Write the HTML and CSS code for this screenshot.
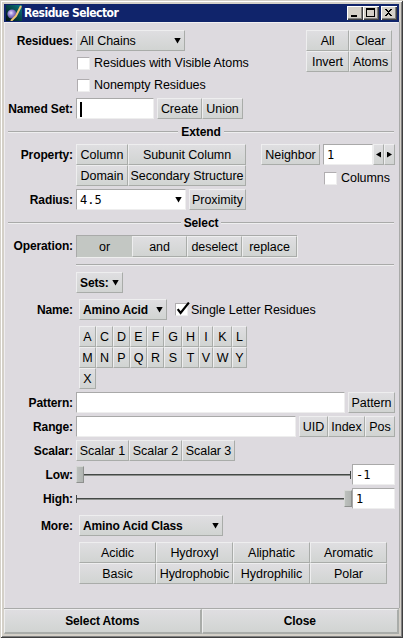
FILE: index.html
```html
<!DOCTYPE html>
<html lang="en">
<head>
<meta charset="utf-8">
<title>Residue Selector</title>
<link rel="stylesheet" href="styles.css">
</head>
<body>
<div class="window">
  <header class="titlebar">
    <svg class="logo" width="16" height="16" viewBox="0 0 16 16">
      <defs>
        <linearGradient id="sky" x1="0" y1="1" x2="1" y2="0"><stop offset="0" stop-color="#001010"/><stop offset=".5" stop-color="#064545"/><stop offset="1" stop-color="#087887"/></linearGradient>
        <radialGradient id="ball" cx=".4" cy=".38" r=".65"><stop offset="0" stop-color="#eee8ff"/><stop offset=".4" stop-color="#a08fda"/><stop offset="1" stop-color="#4d3f93"/></radialGradient>
      </defs>
      <rect width="16" height="16" fill="url(#sky)"/>
      <circle cx="6" cy="9" r="4.6" fill="url(#ball)"/>
      <path d="M15 1L10 11L5 16" fill="none" stroke="#f0c675" stroke-width="2"/>
    </svg>
    <h1 class="title">Residue Selector</h1>
    <span class="winbtn"><svg width="15" height="14"><path d="M4 9h6v2H4z"/></svg></span>
    <span class="winbtn"><svg width="15" height="14"><path fill-rule="evenodd" d="M3 2h9v9H3zM4 4v6h7V4z"/></svg></span>
    <span class="winbtn gap"><svg width="15" height="14"><path d="M4 3h2v1h1v1h1V4h1V3h2v1h-1v1H9v1H8v1h1v1h1v1h1v1H9V9H8V8H7v1H6v1H4V9h1V8h1V7h1V6H6V5H5V4H4z"/></svg></span>
  </header>

  <main class="panel">
    <section class="split first">
      <div>
        <div class="row"><b class="label">Residues:</b><span class="btn menu w109">All Chains<i class="down"></i></span></div>
        <div class="row check-row"><span class="check"></span>Residues with Visible Atoms</div>
        <div class="row check-row"><span class="check"></span>Nonempty Residues</div>
        <div class="row named"><b class="label">Named Set:</b><span class="field w78"><i class="caret"></i></span><span class="btn w45 ml3">Create</span><span class="btn w41">Union</span></div>
      </div>
      <div class="grid actions"><span class="btn">All</span><span class="btn">Clear</span><span class="btn">Invert</span><span class="btn">Atoms</span></div>
    </section>

    <h2 class="divider">Extend</h2>

    <section class="split">
      <div>
        <div class="row top"><b class="label">Property:</b><div class="grid property"><span class="btn">Column</span><span class="btn">Subunit Column</span><span class="btn">Domain</span><span class="btn">Secondary Structure</span></div></div>
        <div class="row mt3"><b class="label">Radius:</b><span class="field combo w110">4.5<i class="down"></i></span><span class="btn w57 ml3">Proximity</span></div>
      </div>
      <div class="neighbor">
        <div class="row"><span class="btn w59">Neighbor</span><span class="field w50 ml3">1</span><span class="btn w11"><i class="side left"></i></span><span class="btn w11"><i class="side right"></i></span></div>
        <div class="row columns"><span class="check"></span>Columns</div>
      </div>
    </section>

    <h2 class="divider">Select</h2>

    <div class="row op"><b class="label">Operation:</b><div class="radio"><span class="btn on w55">or</span><span class="btn w55">and</span><span class="btn w55">deselect</span><span class="btn w55">replace</span></div></div>
    <hr class="rule">
    <div class="row sets"><b class="label"></b><span class="btn menu bold w47">Sets:<i class="down"></i></span></div>
    <div class="row mt6"><b class="label">Name:</b><span class="btn menu bold w88 ml3">Amino Acid<i class="down"></i></span><span class="check single"><svg class="tick" width="15" height="14" viewBox="0 0 15 14"><path d="M1.7 7.2L4.6 11L12.9 0.6" fill="none" stroke="#000" stroke-width="2.2"/></svg></span>Single Letter Residues</div>
    <div class="grid letters"><span class="btn">A</span><span class="btn">C</span><span class="btn">D</span><span class="btn">E</span><span class="btn">F</span><span class="btn">G</span><span class="btn">H</span><span class="btn">I</span><span class="btn">K</span><span class="btn">L</span><span class="btn">M</span><span class="btn">N</span><span class="btn">P</span><span class="btn">Q</span><span class="btn">R</span><span class="btn">S</span><span class="btn">T</span><span class="btn">V</span><span class="btn">W</span><span class="btn">Y</span><span class="btn">X</span></div>
    <div class="row mt3"><b class="label">Pattern:</b><span class="field grow"></span><span class="btn w47 ml3">Pattern</span></div>
    <div class="row mt3"><b class="label">Range:</b><span class="field grow"></span><span class="btn w29 ml3">UID</span><span class="btn w37">Index</span><span class="btn w30">Pos</span></div>
    <div class="row mt3"><b class="label">Scalar:</b><span class="btn w53">Scalar 1</span><span class="btn w53">Scalar 2</span><span class="btn w53">Scalar 3</span></div>
    <div class="row mt3"><b class="label">Low:</b><div class="slider"><i class="thumb"></i><i class="track"></i><i class="end"></i></div><span class="field w43">-1</span></div>
    <div class="row mt3"><b class="label">High:</b><div class="slider high"><i class="end"></i><i class="track"></i><i class="thumb"></i></div><span class="field w43">1</span></div>
    <div class="row mt6"><b class="label">More:</b><span class="btn menu bold w144 ml3">Amino Acid Class<i class="down"></i></span></div>
    <div class="grid classes"><span class="btn">Acidic</span><span class="btn">Hydroxyl</span><span class="btn">Aliphatic</span><span class="btn">Aromatic</span><span class="btn">Basic</span><span class="btn">Hydrophobic</span><span class="btn">Hydrophilic</span><span class="btn">Polar</span></div>
  </main>

  <footer class="footer"><span class="btn bold">Select Atoms</span><span class="btn bold">Close</span></footer>
</div>
</body>
</html>
```

FILE: styles.css
```css
* { box-sizing: border-box; }
body {
  margin: 0;
  width: 403px;
  height: 638px;
  overflow: hidden;
  font: 12.5px/14px "Liberation Sans", Arial, sans-serif;
  letter-spacing: -0.05px;
  color: #000;
}
b, .bold { font-size: 12px; font-weight: bold; letter-spacing: -0.12px; }
i { font-style: normal; flex: none; }
.window {
  display: flex;
  flex-direction: column;
  width: 403px;
  height: 638px;
  padding: 4px;
  background: #d4d0c8;
  box-shadow: inset 1px 1px #d4d0c8, inset -1px -1px #404040, inset 2px 2px #fff, inset -2px -2px #808080;
}
.titlebar {
  display: flex;
  align-items: center;
  flex: none;
  height: 18px;
  padding: 0 2px;
  background: #10246b;
}
.logo { flex: none; }
.title {
  flex: 1;
  margin: 0 0 0 2px;
  font: bold 12px/16px "DejaVu Sans Condensed", "DejaVu Sans", sans-serif;
  letter-spacing: -0.53px;
  color: #fff;
  white-space: nowrap;
}
.winbtn {
  flex: none;
  width: 16px;
  height: 14px;
  background: #d4d0c8;
  box-shadow: inset 1px 1px #fff, inset -1px -1px #404040, inset -2px -2px #808080;
}
.winbtn svg { display: block; }
.gap { margin-left: 2px; }
.panel {
  flex: 1;
  padding-right: 2px;
  background: #dddadf;
  border-top: 1px solid #f2f0f2;
  border-left: 1px solid #efedf0;
  border-right: 2px solid #dddadf;
  box-shadow: 1px 0 #a9aaa9;
  white-space: nowrap;
}
.split { display: flex; justify-content: space-between; align-items: flex-start; }
.first { padding: 7px 3px 0 0; }
.row { display: flex; align-items: center; }
.row.top { align-items: flex-start; }
.top .label { padding-top: 4px; }
.label { flex: none; width: 68px; margin-right: 3px; text-align: right; }
.btn {
  display: flex;
  align-items: center;
  justify-content: center;
  flex: none;
  height: 21px;
  border: 1px solid;
  border-color: #eeeeef #a9aca9 #a9aca9 #eeeeef;
  background: linear-gradient(#dfdee1, #d1d4d2);
  white-space: nowrap;
}
.menu { justify-content: space-between; padding: 0 3px; }
.down { width: 7px; height: 6px; background: #000; clip-path: polygon(0 0, 100% 0, 50% 100%); }
.field {
  display: flex;
  align-items: center;
  flex: none;
  height: 21px;
  padding: 1px 3px 0;
  border: 1px solid;
  border-color: #a9a9a9 #eeeeee #eeeeee #a9a9a9;
  background: #fff;
  font: 12px/14px "DejaVu Sans Mono", monospace;
  letter-spacing: 0;
}
.grow { flex: 1; }
.combo { justify-content: space-between; padding: 0 3px; }
.caret { width: 2px; height: 15px; background: #000; }
.check {
  position: relative;
  flex: none;
  width: 13px;
  height: 13px;
  margin-right: 4px;
  border: 1px solid;
  border-color: #b0adb0 #eee #eee #b0adb0;
  background: #fff;
}
.check-row { margin: 5px 0 0 72px; height: 14px; }
.check-row + .check-row { margin-top: 8px; }
.named { margin-top: 6px; }
.single { margin-left: 8px; margin-right: 3px; }
.tick { position: absolute; left: 0; top: -2px; }
.grid { display: grid; grid-auto-rows: 21px; }
.actions { grid-template-columns: 43px 43px; }
.property { grid-template-columns: 52px 118px; }
.letters { margin: 6px 0 0 74px; grid-template-columns: 17px 17px 17px 17px 17px 18px 17px 14px 19px 15px; }
.classes { margin: 6px 0 0 74px; grid-template-columns: repeat(4, 77px); }
.divider {
  display: flex;
  align-items: center;
  gap: 3px;
  height: 14px;
  margin: 6px 1px 5px 3px;
  font: bold 12px/14px "Liberation Sans", Arial, sans-serif;
  letter-spacing: -0.1px;
}
.divider::before, .divider::after {
  content: "";
  flex: 1;
  height: 2px;
  background: linear-gradient(#a9aaa9 50%, #eeeeef 50%);
}
.columns { margin: 6px 0 0 63px; }
.op { margin-top: 5px; }
.radio {
  display: flex;
  width: 221px;
  height: 22px;
  border: solid #a9aaa9;
  border-width: 1px 0 0 1px;
  box-shadow: 1px 1px #eee;
}
.radio .on { background: #c3c7c3; border-color: #c3c7c3; }
.rule { height: 2px; margin: 7px 1px 6px 71px; border: 0; background: linear-gradient(#a9aaa9 50%, #eeeeef 50%); }
.slider { display: flex; align-items: center; flex: 1; height: 21px; padding-right: 1px; }
.slider.high { padding-right: 0; }
.track { flex: 1 1 auto; height: 2px; background: linear-gradient(#444846 50%, #8e918e 50%); }
.end { width: 1px; height: 8px; background: #444846; }
.thumb {
  width: 8px;
  height: 17px;
  border: 1px solid;
  border-color: #d5d7d5 #8e908e #8e908e #d5d7d5;
  background: linear-gradient(90deg, #bcc0bd, #b0b4b1);
}
.mt3 { margin-top: 3px; }
.mt6 { margin-top: 6px; }
.ml3 { margin-left: 3px; }
.w11 { width: 11px; }
.w29 { width: 29px; }
.w30 { width: 30px; }
.w37 { width: 37px; }
.w41 { width: 41px; }
.w43 { width: 43px; }
.w45 { width: 45px; }
.w47 { width: 47px; }
.w50 { width: 50px; }
.w53 { width: 53px; }
.w55 { width: 55px; }
.w57 { width: 57px; }
.w59 { width: 59px; }
.w78 { width: 78px; }
.w88 { width: 88px; }
.w109 { width: 109px; }
.w110 { width: 110px; }
.w144 { width: 144px; }
.side { width: 5px; height: 6px; background: #000; }
.left { clip-path: polygon(100% 0, 100% 100%, 0 50%); }
.right { clip-path: polygon(0 0, 100% 50%, 0 100%); }
.footer { display: flex; flex: none; height: 26px; border-top: 1px solid #a9aaa9; }
.footer .btn { flex: 1; height: 25px; border-width: 1px 2px 2px 1px; }
```
